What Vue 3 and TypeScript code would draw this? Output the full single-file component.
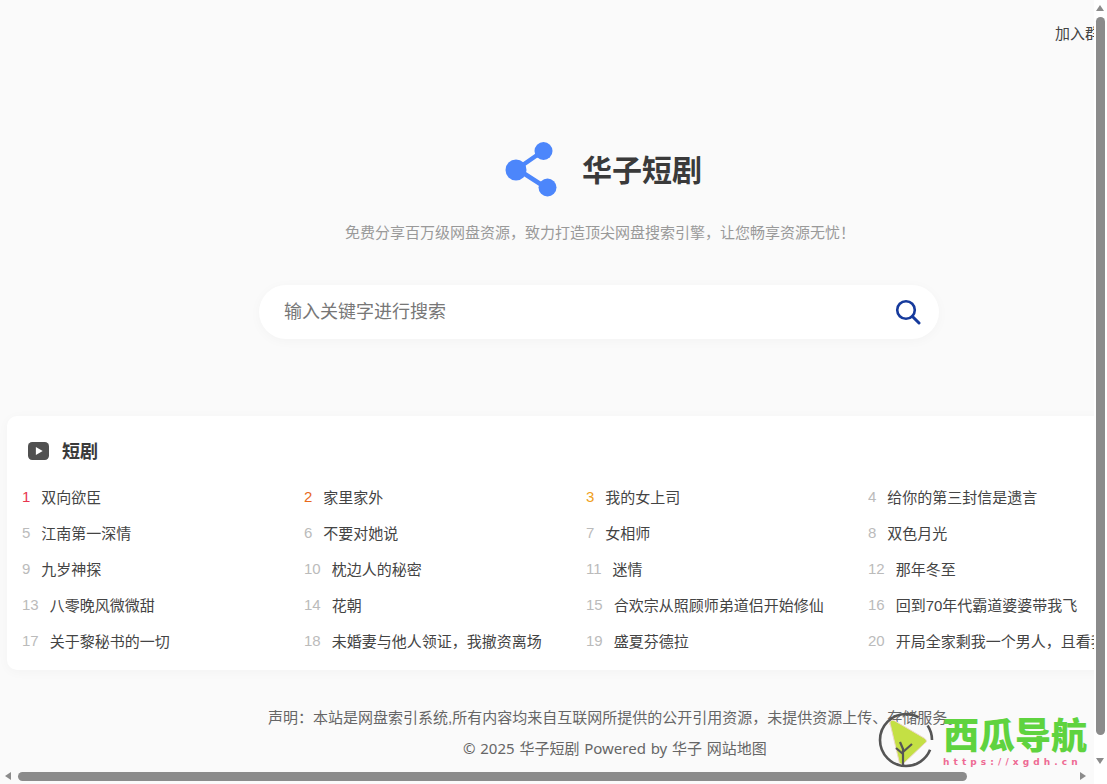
<script setup lang="ts">
const names: string[] = [
  '双向欲臣','家里家外','我的女上司','给你的第三封信是遗言',
  '江南第一深情','不要对她说','女相师','双色月光',
  '九岁神探','枕边人的秘密','迷情','那年冬至',
  '八零晚风微微甜','花朝','合欢宗从照顾师弟道侣开始修仙','回到70年代霸道婆婆带我飞',
  '关于黎秘书的一切','未婚妻与他人领证，我撤资离场','盛夏芬德拉','开局全家剩我一个男人，且看我如何逆袭'
]
const items = names.map((name, i) => ({ name, rank: i + 1, cls: i < 3 ? `r${i + 1}` : '' }))
</script>

<template>
  <div class="screen">
    <div class="viewport">
      <div class="page">
        <div class="topbar"><span class="join">加入群聊</span></div>
        <header class="hero">
          <div class="brand">
            <svg class="logo" viewBox="0 0 54 56" width="54" height="56">
              <path d="M12 28 L38 10 M12 28 L40 46" stroke="#4c86fb" stroke-width="4.5" fill="none" />
              <circle cx="11" cy="29" r="10.500" fill="#4c86fb" />
              <circle cx="38.500" cy="10" r="9" fill="#4c86fb" />
              <circle cx="42.500" cy="46.500" r="9" fill="#4c86fb" />
            </svg>
            <h1>华子短剧</h1>
          </div>
          <p class="tagline">免费分享百万级网盘资源，致力打造顶尖网盘搜索引擎，让您畅享资源无忧！</p>
          <div class="search">
            <span class="placeholder">输入关键字进行搜索</span>
            <svg viewBox="0 0 26 26" width="26" height="26">
              <circle cx="11" cy="11" r="8.800" fill="none" stroke="#163a9c" stroke-width="2.600" />
              <path d="M17.500 17.500 L24 24" stroke="#163a9c" stroke-width="3" stroke-linecap="round" />
            </svg>
          </div>
        </header>
        <section class="card">
          <div class="card-title">
            <svg viewBox="0 0 20 17" width="21" height="18">
              <rect width="20" height="17" rx="4" fill="#505050" />
              <path d="M7.500 4.800 L14 8.500 L7.500 12.200 Z" fill="#fff" />
            </svg>
            <h2>短剧</h2>
          </div>
          <ul class="list">
            <li v-for="it in items" :key="it.rank">
              <span class="rank" :class="it.cls">{{ it.rank }}</span>
              <span class="name">{{ it.name }}</span>
            </li>
          </ul>
        </section>
        <footer class="foot">
          <p class="notice">声明：本站是网盘索引系统,所有内容均来自互联网所提供的公开引用资源，未提供资源上传、存储服务。</p>
          <p class="copy">© 2025 华子短剧 Powered by 华子 网站地图</p>
        </footer>
      </div>
    </div>

    <div class="vbar">
      <i class="arrow up"></i>
      <i class="vthumb"></i>
      <i class="arrow down"></i>
    </div>
    <div class="hbar">
      <i class="arrow left"></i>
      <i class="hthumb"></i>
      <i class="arrow right"></i>
    </div>

    <div class="watermark">
      <svg viewBox="0 0 56 56" width="56" height="56">
        <circle cx="28" cy="28" r="26" fill="none" stroke="#555" stroke-width="2.600" stroke-dasharray="125 12" stroke-dashoffset="-10" />
        <path d="M12 11 C12 8 15 8 17 9 L46 26 C49 28 49 30 47 31 L26 51 C24 53 21 52 21 49 Z" fill="#c4e044" stroke="#ecd8c8" stroke-width="1" />
        <path d="M25 54 L25 36 M25 42 L18 36 M25 40 L34 32 M25 37 L22 30" stroke="#555" stroke-width="2.200" fill="none" />
      </svg>
      <div class="wm-text">
        <div class="wm-title">西瓜导航</div>
        <div class="wm-url">https://xgdh.cn</div>
      </div>
    </div>
  </div>
</template>

<style>
html, body { margin: 0; overflow: hidden; background: #fafafa; }
</style>

<style scoped>
.screen {
  position: relative;
  width: 1107px;
  height: 784px;
  overflow: hidden;
  background: #fafafa;
  font-family: "Liberation Sans", "Noto Sans CJK SC", sans-serif;
  color: #333;
}
.viewport { width: 1094px; height: 770px; overflow: hidden; }
.page { width: 1222px; }
.topbar { height: 66px; display: flex; padding: 24px 0 0 1055px; box-sizing: border-box; }
.join { font-size: 15px; line-height: 20px; white-space: nowrap; color: #444; }
.hero { display: flex; flex-direction: column; align-items: flex-start; height: 350px; }
.brand { display: flex; align-items: center; margin: 75px 0 0 505px; height: 56px; gap: 23px; }
.brand h1 { margin: 4px 0 0; font-size: 30px; line-height: 40px; font-weight: 700; color: #3a3a3a; }
.tagline { margin: 26px 0 0 345px; font-size: 15px; line-height: 20px; color: #999; white-space: nowrap; }
.search {
  margin: 42px 0 0 259px;
  width: 680px;
  height: 54px;
  box-sizing: border-box;
  padding: 0 18px 0 25px;
  border-radius: 27px;
  background: #fff;
  box-shadow: 0 2px 12px rgba(0, 0, 0, 0.03);
  display: flex;
  align-items: center;
  justify-content: space-between;
}
.placeholder { font-size: 18px; line-height: 24px; margin-top: -1px; color: #777; }
.card {
  margin-left: 7px;
  width: 1215px;
  height: 254px;
  box-sizing: border-box;
  padding: 20px 0 0 15px;
  background: #fff;
  border-radius: 10px;
  box-shadow: 0 2px 12px rgba(0, 0, 0, 0.03);
}
.card-title { display: flex; align-items: center; gap: 13px; height: 30px; padding-left: 6px; }
.card-title h2 { margin: -2px 0 0; font-size: 18px; font-weight: 700; color: #3a3a3a; }
.list {
  list-style: none;
  margin: 12px 0 0;
  padding: 0;
  display: grid;
  grid-template-columns: repeat(4, 282px);
  grid-auto-rows: 36px;
}
.list li { display: flex; align-items: center; font-size: 15px; white-space: nowrap; overflow: hidden; color: #444; }
.rank { color: #bbb; margin-right: 11px; }
.r1 { color: #e8364f; }
.r2 { color: #e8691c; }
.r3 { color: #f0a020; }
.foot { text-align: left; font-size: 15px; color: #666; }
.notice { margin: 38px 0 0 268px; line-height: 20px; white-space: nowrap; }
.copy { margin: 10px 0 0 463px; line-height: 20px; white-space: nowrap; word-spacing: 0.900px; font-family: "Noto Sans", "Noto Sans CJK SC", sans-serif; }
.vbar { position: absolute; top: 0; right: 0; width: 13px; height: 784px; background: #fff; }
.vthumb { position: absolute; left: 2px; top: 17px; width: 9px; height: 718px; border-radius: 5px; background: #8b8b8b; }
.hbar { position: absolute; left: 0; bottom: 0; width: 1094px; height: 14px; background: #fafafa; }
.hthumb { position: absolute; left: 18px; top: 2px; width: 949px; height: 9px; border-radius: 5px; background: #8b8b8b; }
.arrow { position: absolute; width: 0; height: 0; border: 4.500px solid transparent; }
.up { left: 2px; top: 5px; border-bottom: 6px solid #8b8b8b; border-top: 0; }
.down { left: 2px; top: 758px; border-top: 6px solid #8b8b8b; border-bottom: 0; }
.left { left: 5px; top: 2px; border-right: 6px solid #8b8b8b; border-left: 0; }
.right { left: 1080px; top: 2px; border-left: 6px solid #8b8b8b; border-right: 0; }
.watermark { position: absolute; left: 878px; top: 712px; width: 212px; height: 58px; display: flex; gap: 9px; }
.wm-text { display: flex; flex-direction: column; padding-top: 2px; }
.wm-title { font-family: "Noto Sans CJK SC", sans-serif; font-size: 36px; font-weight: 900; line-height: 38px; color: #5fd33f; white-space: nowrap; }
.wm-url { font-family: "DejaVu Sans", sans-serif; font-size: 9px; font-weight: 700; line-height: 12px; margin-top: 4px; letter-spacing: 4.100px; color: #ee6a94; white-space: nowrap; }
</style>
